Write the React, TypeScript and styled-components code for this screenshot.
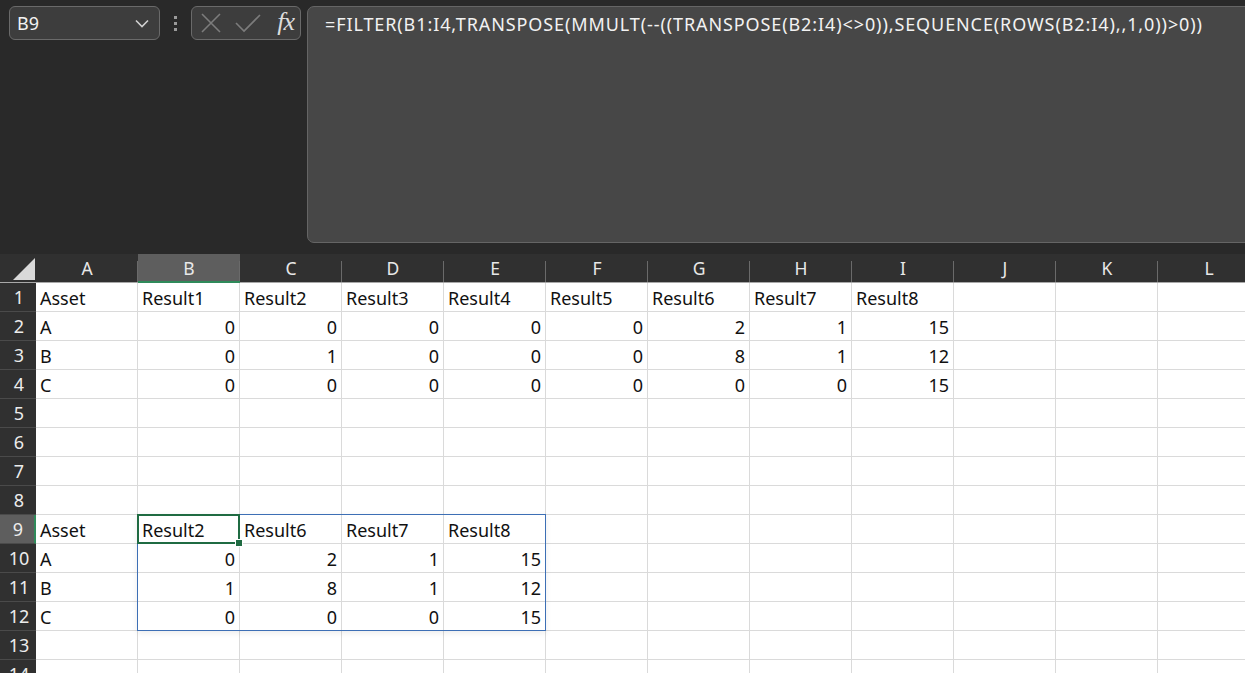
import React from "react";
import styled, { createGlobalStyle } from "styled-components";

const GlobalStyle = createGlobalStyle`
  html, body {
    margin: 0;
    padding: 0;
    background: #ffffff;
    overflow: hidden;
  }
  body {
    font-family: "Noto Sans", "Open Sans", sans-serif;
  }
`;

const Window = styled.div`
  width: 1245px;
  height: 673px;
  overflow: hidden;
  background: #ffffff;
`;

const FormulaArea = styled.div`
  display: flex;
  align-items: flex-start;
  height: 254px;
  padding: 6px 0 0 9px;
  box-sizing: border-box;
  background: #292929;
  overflow: hidden;
`;

const NameBox = styled.div`
  display: flex;
  align-items: center;
  justify-content: space-between;
  width: 151px;
  height: 34px;
  padding: 0 10px 0 7px;
  box-sizing: border-box;
  background: #3d3d3d;
  border: 1px solid #6a6a6a;
  border-radius: 6px;
  color: #f2f2f2;
  font-size: 18px;
`;

const Grip = styled.div`
  display: flex;
  flex-direction: column;
  justify-content: center;
  gap: 3px;
  width: 31px;
  height: 34px;
  align-items: center;
`;

const GripDot = styled.span`
  width: 3px;
  height: 3px;
  background: #9a9a9a;
`;

const ActionBox = styled.div`
  display: flex;
  align-items: center;
  gap: 13px;
  width: 110px;
  height: 34px;
  padding: 0 6px 0 8px;
  box-sizing: border-box;
  background: #3d3d3d;
  border: 1px solid #6a6a6a;
  border-radius: 6px;
`;

const FxLabel = styled.span`
  margin-left: auto;
  color: #dcdcdc;
  font-family: "Liberation Serif", "DejaVu Serif", serif;
  font-style: italic;
  font-size: 26px;
  line-height: 1;
  letter-spacing: -1px;
  padding-bottom: 2px;
`;

const FormulaBox = styled.div`
  flex: 1;
  height: 237px;
  margin-left: 6px;
  margin-right: -20px;
  padding: 5px 0 0 17px;
  box-sizing: border-box;
  background: #474747;
  border: 1px solid #656565;
  border-radius: 7px;
  color: #f2f2f2;
  font-size: 18px;
  letter-spacing: 0.9px;
  white-space: nowrap;
`;

const SheetWrap = styled.div`
  position: relative;
`;

const Sheet = styled.div`
  display: grid;
  grid-template-columns: 36px repeat(12, 102px);
  grid-auto-rows: 29px;
`;

const Overlay = styled(Sheet)`
  position: absolute;
  inset: 0;
  pointer-events: none;
`;

const Corner = styled.div`
  background: #303030;
  border-bottom: 1px solid #a8a8a8;
  box-sizing: border-box;
  display: flex;
  align-items: flex-end;
  justify-content: flex-end;
  padding: 0 1px 2px 0;
`;

const ColHeader = styled.div<{ $active?: boolean }>`
  position: relative;
  display: flex;
  align-items: center;
  justify-content: center;
  box-sizing: border-box;
  background: ${(p) => (p.$active ? "#5e5e5e" : "#303030")};
  border-bottom: ${(p) => (p.$active ? "2px solid #2f8a5a" : "1px solid #a8a8a8")};
  color: #e8e8e8;
  font-size: 17.5px;
  padding-top: ${(p) => (p.$active ? "1px" : "0")};

  &::after {
    content: "";
    position: absolute;
    right: 0;
    top: 7px;
    bottom: 0;
    width: 1px;
    background: #6a6a6a;
  }
`;

const RowHeader = styled.div<{ $active?: boolean }>`
  display: flex;
  align-items: center;
  justify-content: center;
  box-sizing: border-box;
  background: ${(p) => (p.$active ? "#5e5e5e" : "#303030")};
  border-bottom: 1px solid #4a4a4a;
  border-right: ${(p) => (p.$active ? "2px solid #2f8a5a" : "none")};
  color: #ececec;
  font-size: 18px;
  padding-left: 2px;
`;

const Cell = styled.div<{ $num?: boolean }>`
  display: flex;
  align-items: center;
  justify-content: ${(p) => (p.$num ? "flex-end" : "flex-start")};
  box-sizing: border-box;
  padding: 1px 4px 0 4px;
  border-right: 1px solid #dadada;
  border-bottom: 1px solid #dadada;
  color: #111111;
  font-size: 18px;
  white-space: nowrap;
  overflow: hidden;
`;

const SpillOutline = styled.div`
  grid-column: 3 / 7;
  grid-row: 10 / 14;
  margin: -1px 0 0 -1px;
  border: 1px solid #3d6fb5;
  box-shadow: 0 2px 6px rgba(0, 0, 0, 0.08);
`;

const ActiveCell = styled.div`
  position: relative;
  grid-column: 3 / 4;
  grid-row: 10 / 11;
  margin: -1px 0 0 -1px;
  border: 2px solid #1f6b42;

  &::after {
    content: "";
    position: absolute;
    right: -5px;
    bottom: -5px;
    width: 6px;
    height: 6px;
    background: #1f6b42;
    border: 1px solid #ffffff;
  }
`;

const columns = ["A", "B", "C", "D", "E", "F", "G", "H", "I", "J", "K", "L"];

type Value = string | number | null;

const data: Value[][] = [
  ["Asset", "Result1", "Result2", "Result3", "Result4", "Result5", "Result6", "Result7", "Result8"],
  ["A", 0, 0, 0, 0, 0, 2, 1, 15],
  ["B", 0, 1, 0, 0, 0, 8, 1, 12],
  ["C", 0, 0, 0, 0, 0, 0, 0, 15],
  [],
  [],
  [],
  [],
  ["Asset", "Result2", "Result6", "Result7", "Result8"],
  ["A", 0, 2, 1, 15],
  ["B", 1, 8, 1, 12],
  ["C", 0, 0, 0, 15],
  [],
  [],
];

const CloseIcon = () => (
  <svg width="22" height="22" viewBox="0 0 22 22">
    <path d="M2 2 L20 20 M20 2 L2 20" stroke="#7c7c7c" strokeWidth="1.6" fill="none" />
  </svg>
);

const CheckIcon = () => (
  <svg width="26" height="20" viewBox="0 0 26 20">
    <path d="M1 10 L9 18 L25 2" stroke="#7c7c7c" strokeWidth="1.6" fill="none" />
  </svg>
);

const Chevron = () => (
  <svg width="14" height="9" viewBox="0 0 14 9">
    <path d="M1 1.5 L7 7.5 L13 1.5" stroke="#d0d0d0" strokeWidth="1.6" fill="none" />
  </svg>
);

const SelectAll = () => (
  <svg width="22" height="22" viewBox="0 0 22 22">
    <path d="M22 0 L22 22 L0 22 Z" fill="#d9d9d9" />
  </svg>
);

export default function App() {
  return (
    <Window>
      <GlobalStyle />
      <FormulaArea>
        <NameBox>
          <span>B9</span>
          <Chevron />
        </NameBox>
        <Grip>
          <GripDot />
          <GripDot />
          <GripDot />
        </Grip>
        <ActionBox>
          <CloseIcon />
          <CheckIcon />
          <FxLabel>fx</FxLabel>
        </ActionBox>
        <FormulaBox>
          =FILTER(B1:I4,TRANSPOSE(MMULT(--((TRANSPOSE(B2:I4)&lt;&gt;0)),SEQUENCE(ROWS(B2:I4),,1,0))&gt;0))
        </FormulaBox>
      </FormulaArea>
      <SheetWrap>
        <Sheet>
          <Corner>
            <SelectAll />
          </Corner>
          {columns.map((c) => (
            <ColHeader key={c} $active={c === "B"}>
              {c}
            </ColHeader>
          ))}
          {data.map((row, r) => (
            <React.Fragment key={r}>
              <RowHeader $active={r === 8}>{r + 1}</RowHeader>
              {columns.map((c, ci) => {
                const v = row[ci];
                return (
                  <Cell key={c} $num={typeof v === "number"}>
                    {v ?? ""}
                  </Cell>
                );
              })}
            </React.Fragment>
          ))}
        </Sheet>
        <Overlay>
          <SpillOutline />
          <ActiveCell />
        </Overlay>
      </SheetWrap>
    </Window>
  );
}
